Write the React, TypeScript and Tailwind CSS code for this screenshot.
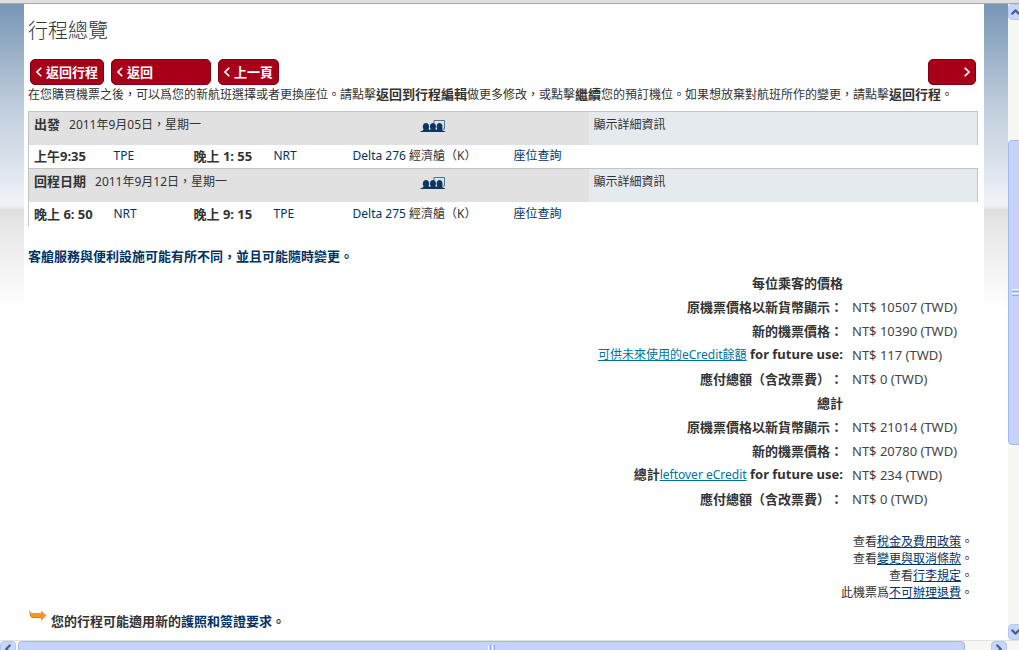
import { ChevronLeft, ChevronRight, ChevronUp, ChevronDown } from 'lucide-react';

const flights = [
  {
    label: '出發',
    date: '2011年9月05日，星期一',
    departTime: '上午9:35',
    from: 'TPE',
    arriveTime: '晚上 1: 55',
    to: 'NRT',
    number: 'Delta 276',
  },
  {
    label: '回程日期',
    date: '2011年9月12日，星期一',
    departTime: '晚上 6: 50',
    from: 'NRT',
    arriveTime: '晚上 9: 15',
    to: 'TPE',
    number: 'Delta 275',
  },
];

const prices = [
  { label: '每位乘客的價格', value: '' },
  { label: '原機票價格以新貨幣顯示：', value: 'NT$ 10507 (TWD)' },
  { label: '新的機票價格：', value: 'NT$ 10390 (TWD)' },
  { label: '', link: '可供未來使用的eCredit餘額', after: ' for future use:', value: 'NT$ 117 (TWD)' },
  { label: '應付總額（含改票費）：', value: 'NT$ 0 (TWD)' },
  { label: '總計', value: '' },
  { label: '原機票價格以新貨幣顯示：', value: 'NT$ 21014 (TWD)' },
  { label: '新的機票價格：', value: 'NT$ 20780 (TWD)' },
  { label: '總計', link: 'leftover eCredit', after: ' for future use:', value: 'NT$ 234 (TWD)' },
  { label: '應付總額（含改票費）：', value: 'NT$ 0 (TWD)' },
];

const policies = [
  { text: '查看', link: '稅金及費用政策' },
  { text: '查看', link: '變更與取消條款' },
  { text: '查看', link: '行李規定' },
  { text: '此機票爲', link: '不可辦理退費' },
];

const redButton =
  'flex h-[26px] items-center gap-1 rounded-[5px] border border-[#7d0012] bg-[#a80019] px-[5px] text-[13px] font-bold text-white';

const scrollButton =
  'flex shrink-0 items-center justify-center rounded-sm border border-[#b4c8f6] bg-[#c6d6fc] text-[#4d6185]';

function BackMark() {
  return (
    <svg width="6" height="10" viewBox="0 0 6 10" className="shrink-0" aria-hidden="true">
      <path d="M5.300.7L1 5l4.300 4.300" fill="none" stroke="currentColor" strokeWidth="1.6" />
    </svg>
  );
}

function NextMark() {
  return (
    <svg width="6" height="10" viewBox="0 0 6 10" className="shrink-0" aria-hidden="true">
      <path d="M.7.7L5 5 .7 9.300" fill="none" stroke="currentColor" strokeWidth="1.6" />
    </svg>
  );
}

function SeatsIcon() {
  return (
    <svg width="26" height="13" viewBox="0 0 26 13" role="img" aria-label="座位">
      <path d="M14 3V.5h10.500V9H22" fill="none" stroke="#4f7596" />
      <path
        d="M0 12c1-1.500 3.500-.8 3.500-3C2.300 7.500 2.600 3 6 3s3.700 4.500 2.500 6l1.500 1 .8-1C9.300 7.500 9.600 3 13 3s3.500 4.500 2.300 6l1.200 1 .8-1C16.200 7.500 16.300 3 19.500 3s3.500 4.500 2.500 6c0 2.200 2.500 1.500 3.500 3z"
        fill="#0b3564"
      />
    </svg>
  );
}

function ArrowIcon() {
  return (
    <svg width="18" height="13" viewBox="0 0 18 13" aria-hidden="true">
      <path d="M.5 0C1 3 2 4 5 4h7V1.500L17.500 6.500 12 12V9H5C1 9 0 6 .5 0z" fill="#f39a1e" />
      <path d="M1 6c1 1.800 2.500 2.500 4.500 2.500H12" fill="none" stroke="#d07c12" />
    </svg>
  );
}

function FlightTable() {
  return (
    <table className="w-full table-fixed border-collapse text-left">
      <colgroup>
        <col className="w-[79px]" />
        <col className="w-[81px]" />
        <col className="w-[79px]" />
        <col className="w-[80px]" />
        <col className="w-[161px]" />
        <col className="w-[80px]" />
        <col />
      </colgroup>
      {flights.map((flight) => (
        <tbody key={flight.number} className="border-l border-[#c4c4c4]">
          <tr className="h-[33px] border-t border-[#c4c4c4] bg-[#e1e1e1] align-top">
            <th colSpan={4} className="pt-1 pl-[5px] font-normal">
              <span className="mr-[9px] text-[13px] font-bold">{flight.label}</span>
              {flight.date}
            </th>
            <td colSpan={2} className="pt-2 pl-[72px]">
              <SeatsIcon />
            </td>
            <td className="border-r border-[#c4c4c4] bg-[#e5eaee] pt-[5px] pl-[5px]">顯示詳細資訊</td>
          </tr>
          <tr className="h-6">
            <td className="pl-[5px] text-[13px] font-bold">{flight.departTime}</td>
            <td className="pl-[6px] text-[#003366]">{flight.from}</td>
            <td className="pl-[5px] text-[13px] font-bold whitespace-nowrap">{flight.arriveTime}</td>
            <td className="pl-[6px] text-[#003366]">{flight.to}</td>
            <td className="pl-[5px] whitespace-nowrap">
              <a href="#flight" className="text-[#003366]">{flight.number}</a> 經濟艙（K）
            </td>
            <td className="pl-[5px]">
              <a href="#seats" className="text-[#003366]">座位查詢</a>
            </td>
            <td />
          </tr>
        </tbody>
      ))}
    </table>
  );
}

function PriceTable() {
  return (
    <table className="ml-auto border-collapse">
      <tbody>
        {prices.map((row, i) => (
          <tr key={i} className="h-6">
            <th className="pr-[9px] text-right text-[13px] font-bold whitespace-nowrap [text-spacing-trim:space-all]">
              {row.label}
              {row.link && (
                <a href="#ecredit" className="text-xs font-normal text-[#00739b] underline">
                  {row.link}
                </a>
              )}
              {row.after}
            </th>
            <td className="w-[126px] text-[13px] text-[#444]">{row.value}</td>
          </tr>
        ))}
      </tbody>
    </table>
  );
}

export default function App() {
  return (
    <div
      lang="zh-TW"
      className="flex min-h-screen flex-col overflow-hidden bg-white font-['Noto_Sans','Noto_Sans_CJK_TC',sans-serif] text-xs leading-4 text-[#333]"
    >
      <div className="h-1 shrink-0 border-b border-[#aaa] bg-[#dfdfdf]" />

      <div className="flex flex-1">
        {/* Page */}
        <div className="flex-1 bg-[linear-gradient(#7896b5_0px,#bccbdb_98px,#eef1f6_196px,#f0f1f3_202px,#dedede_206px,#e6e6e6_220px,#ffffff_305px)] px-6">
          <main className="h-full bg-white pr-[6px] pl-1">
            <h1 className="pt-3 text-xl leading-[30px] font-light">行程總覽</h1>

            <div className="mt-[13px] flex gap-[7px] pl-[2px] pr-[2px]">
              <button className={`${redButton} w-[74px]`}>
                <BackMark />
                返回行程
              </button>
              <button className={`${redButton} w-[100px]`}>
                <BackMark />
                返回
              </button>
              <button className={`${redButton} w-[61px]`}>
                <BackMark />
                上一頁
              </button>
              <button aria-label="繼續" className={`${redButton} ml-auto w-12 justify-end`}>
                <NextMark />
              </button>
            </div>

            <p className="mt-px mb-2">
              在您購買機票之後，可以爲您的新航班選擇或者更換座位。請點擊
              <b className="text-[13px]">返回到行程編輯</b>做更多修改，或點擊
              <b className="text-[13px]">繼續</b>您的預訂機位。如果想放棄對航班所作的變更，請點擊
              <b className="text-[13px]">返回行程</b>。
            </p>

            <FlightTable />

            <p className="mt-[22px] mb-[7px] text-[13px] font-bold text-[#003366]">
              客艙服務與便利設施可能有所不同，並且可能隨時變更。
            </p>

            <PriceTable />

            <ul className="mt-[22px] pr-[5px] text-right leading-[17px]">
              {policies.map((policy) => (
                <li key={policy.link}>
                  {policy.text}
                  <a href="#policy" className="text-[#003366] underline">{policy.link}</a>。
                </li>
              ))}
            </ul>

            <div className="mt-2 flex gap-1 pl-[1px]">
              <ArrowIcon />
              <p className="mt-1 text-[13px] font-bold">
                您的行程可能適用新的
                <a href="#passport" className="text-[#003366]">護照和簽證要求</a>。
              </p>
            </div>
          </main>
        </div>

        {/* Vertical scroll bar */}
        <div className="flex w-[11px] shrink-0 flex-col overflow-hidden bg-[#f7f7f3]">
          <button aria-label="向上捲動" className={`${scrollButton} h-4 w-[15px]`}>
            <ChevronUp size={14} strokeWidth={4} />
          </button>
          <div className="grow-[120] basis-0" />
          <div className="flex w-[15px] grow-[304] basis-0 flex-col items-center justify-center gap-px rounded-sm border border-[#a3b9ef] bg-[#c5d3fb]">
            <i className="h-px w-[7px] bg-[#eef4fe]" />
            <i className="h-px w-[7px] bg-[#8cb0f8]" />
            <i className="h-px w-[7px] bg-[#eef4fe]" />
            <i className="h-px w-[7px] bg-[#8cb0f8]" />
          </div>
          <div className="grow-[179] basis-0" />
          <button aria-label="向下捲動" className={`${scrollButton} h-4 w-[15px]`}>
            <ChevronDown size={14} strokeWidth={4} />
          </button>
        </div>
      </div>

      {/* Horizontal scroll bar */}
      <div className="flex h-[10px] shrink-0 gap-[2px] overflow-hidden border-t border-[#e4e3da] bg-[#f7f7f3] pr-3">
        <button aria-label="向左捲動" className={`${scrollButton} h-[15px] w-4`}>
          <ChevronLeft size={14} strokeWidth={4} />
        </button>
        <div className="flex h-[15px] grow-[947] items-center justify-center gap-px rounded-sm border border-[#a3b9ef] bg-[#c5d3fb]">
          <i className="h-[7px] w-px bg-[#eef4fe]" />
          <i className="h-[7px] w-px bg-[#8cb0f8]" />
          <i className="h-[7px] w-px bg-[#eef4fe]" />
          <i className="h-[7px] w-px bg-[#8cb0f8]" />
        </div>
        <div className="grow-[22]" />
        <button aria-label="向右捲動" className={`${scrollButton} h-[15px] w-4`}>
          <ChevronRight size={14} strokeWidth={4} />
        </button>
      </div>
    </div>
  );
}
